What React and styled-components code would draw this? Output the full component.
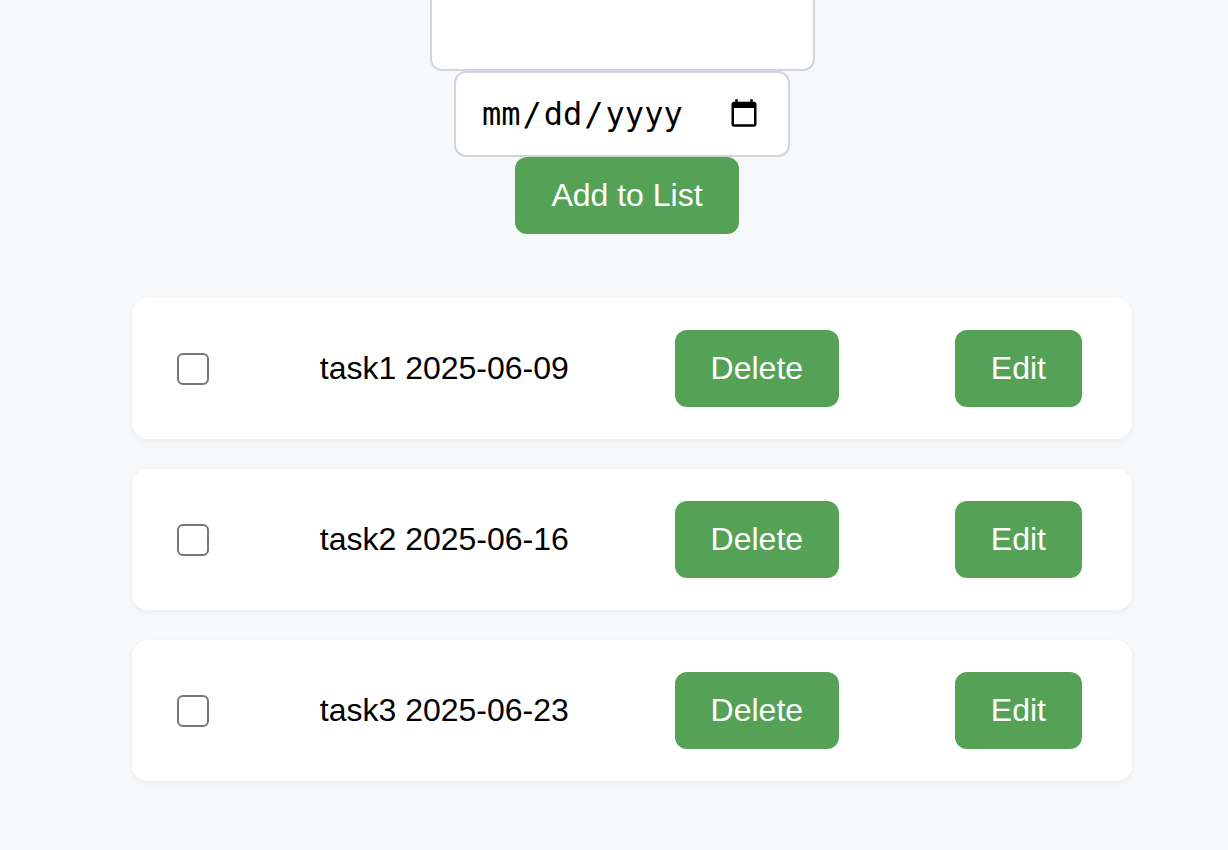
import React, { useState } from "react";
import styled, { createGlobalStyle } from "styled-components";

const GlobalStyle = createGlobalStyle`
  * { box-sizing: border-box; }
  body {
    margin: 0;
    background: #f7f8fa;
    color: #000;
    font-family: Arial, "Liberation Sans", sans-serif;
    font-size: 32px;
    line-height: 37px;
  }
`;

const Page = styled.main`
  padding: 0 0 64px 16px;
`;

const Form = styled.form`
  display: flex;
  flex-direction: column;
  align-items: center;
`;

const TextField = styled.input`
  width: 385px;
  max-width: 100%;
  height: 86px;
  margin-top: -15px;
  padding: 0 24px;
  border: 2px solid #d2d5db;
  border-radius: 12px;
  background: #fff;
  font: inherit;
`;

const DateField = styled(TextField)`
  width: 336px;
  margin-top: 0;
  padding-right: 28px;
  color: #000;
  font-family: "DejaVu Sans Mono", monospace;

  &::-webkit-datetime-edit-month-field,
  &::-webkit-datetime-edit-day-field,
  &::-webkit-datetime-edit-year-field {
    padding: 0 2px;
  }

  &::-webkit-calendar-picker-indicator {
    width: 32px;
    height: 32px;
    padding: 0;
  }
`;

const Button = styled.button`
  height: 77px;
  margin: ${(p) => (p.$after ? "0 0 0 10px" : "0 10px 0 0")};
  padding: 0 36px;
  border: 0;
  border-radius: 12px;
  background: #55a257;
  color: #fff;
  font: inherit;
  cursor: pointer;
`;

const List = styled.ul`
  display: flex;
  flex-direction: column;
  gap: 30px;
  max-width: 1020px;
  margin: 64px auto 0;
  padding: 0 0 0 20px;
  list-style: none;
`;

const Task = styled.li`
  display: flex;
  align-items: center;
  justify-content: space-between;
  padding: 32px 40px;
  border-radius: 16px;
  background: #fff;
  box-shadow: 0 2px 6px rgba(0, 0, 0, 0.05);
`;

const Check = styled.input`
  appearance: none;
  width: 32px;
  height: 32px;
  margin: 0 5px;
  border: 2px solid #767676;
  border-radius: 6px;
  background: #fff;

  &:checked {
    border-color: #0075ff;
    background: #0075ff;
    box-shadow: inset 0 0 0 6px #fff;
  }
`;

const tasks = [
  { id: "task1", due: "2025-06-09" },
  { id: "task2", due: "2025-06-16" },
  { id: "task3", due: "2025-06-23" },
];

export default function App() {
  const [name, setName] = useState("");
  const [due, setDue] = useState("");

  return (
    <>
      <GlobalStyle />
      <Page>
        <Form onSubmit={(e) => e.preventDefault()}>
          <TextField
            type="text"
            aria-label="Task"
            value={name}
            onChange={(e) => setName(e.target.value)}
          />
          <DateField
            type="date"
            aria-label="Due date"
            value={due}
            onChange={(e) => setDue(e.target.value)}
          />
          <Button type="submit" $after>Add to List</Button>
        </Form>
        <List>
          {tasks.map((task) => (
            <Task key={task.id}>
              <Check type="checkbox" id={task.id} />
              <label htmlFor={task.id}>{task.id} {task.due}</label>
              <Button type="button">Delete</Button>
              <Button type="button">Edit</Button>
            </Task>
          ))}
        </List>
      </Page>
    </>
  );
}
